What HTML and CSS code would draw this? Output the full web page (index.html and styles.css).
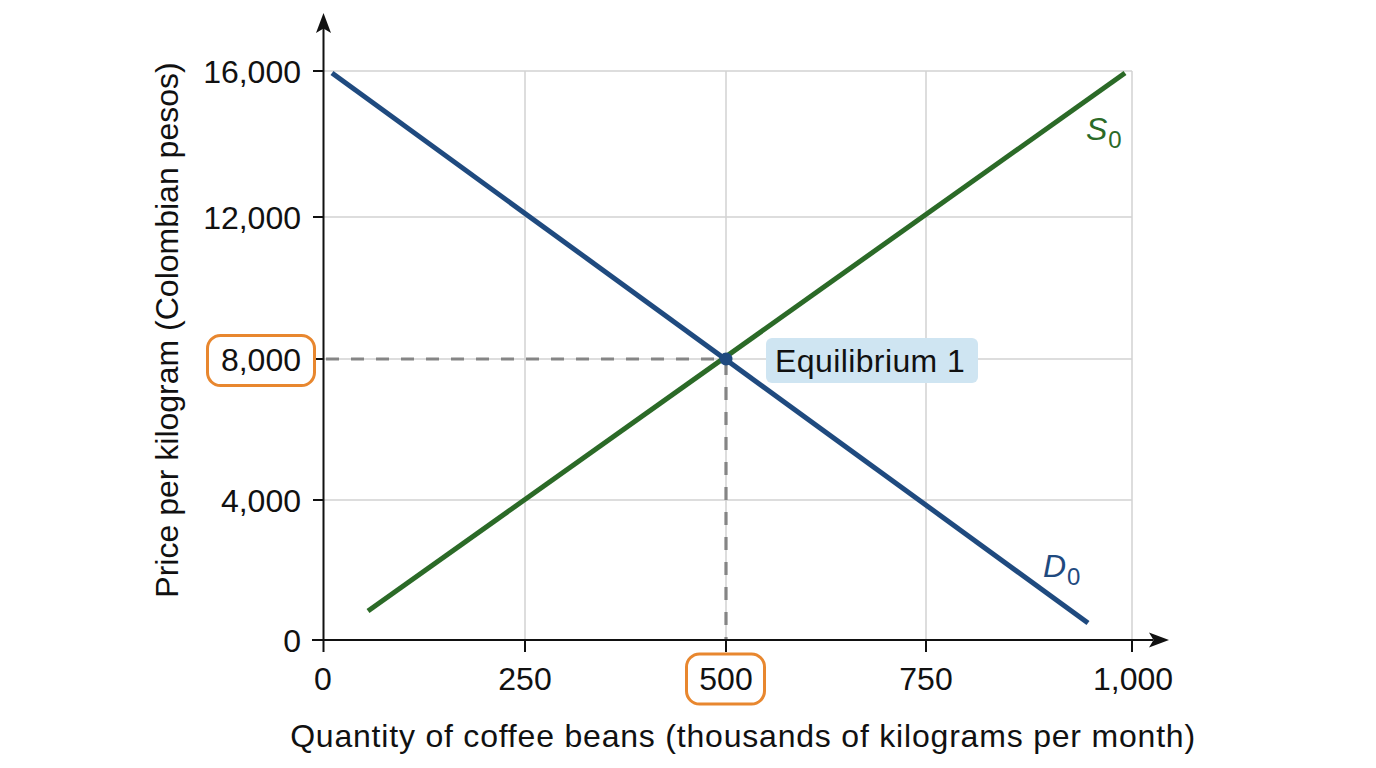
FILE: index.html
```html
<!DOCTYPE html>
<html lang="en">
<head>
<meta charset="utf-8">
<title>Coffee bean market equilibrium</title>
<link rel="stylesheet" href="styles.css">
</head>
<body>
<main class="stage">
<svg class="chart" width="1376" height="768" viewBox="0 0 1376 768" xmlns="http://www.w3.org/2000/svg">
  <!-- grid -->
  <g class="grid">
    <line x1="323" y1="71" x2="1132" y2="71"/>
    <line x1="323" y1="217" x2="1132" y2="217"/>
    <line x1="323" y1="359" x2="1132" y2="359"/>
    <line x1="323" y1="500" x2="1132" y2="500"/>
    <line x1="525" y1="71" x2="525" y2="640"/>
    <line x1="726" y1="71" x2="726" y2="640"/>
    <line x1="926" y1="71" x2="926" y2="640"/>
    <line x1="1132" y1="71" x2="1132" y2="640"/>
  </g>

  <!-- dashed guides -->
  <g class="guide">
    <line x1="326" y1="359" x2="726" y2="359"/>
    <line x1="726" y1="362" x2="726" y2="640"/>
  </g>

  <!-- axes -->
  <g class="axis">
    <line x1="323.5" y1="28" x2="323.5" y2="652"/>
    <line x1="312" y1="640" x2="1153" y2="640"/>
    <line x1="313" y1="71" x2="323" y2="71"/>
    <line x1="313" y1="217" x2="323" y2="217"/>
    <line x1="313" y1="359" x2="323" y2="359"/>
    <line x1="313" y1="500" x2="323" y2="500"/>
    <line x1="525" y1="640" x2="525" y2="652"/>
    <line x1="726" y1="640" x2="726" y2="652"/>
    <line x1="926" y1="640" x2="926" y2="652"/>
    <line x1="1132" y1="640" x2="1132" y2="652"/>
  </g>
  <path class="arrow" d="M323.5 13 L331 33 L323.5 28.5 L316 33 Z"/>
  <path class="arrow" d="M1169 640 L1149 632.5 L1153.5 640 L1149 647.5 Z"/>

  <!-- curves -->
  <line class="supply" x1="368" y1="611" x2="1125" y2="73"/>
  <line class="demand" x1="332" y1="73" x2="1088" y2="623"/>
  <circle class="eq-dot" cx="726" cy="359" r="6.5"/>

  <!-- y tick labels -->
  <g class="tick-y">
    <text x="301" y="82.5">16,000</text>
    <text x="301" y="228.5">12,000</text>
    <text x="301" y="370.5">8,000</text>
    <text x="301" y="511.5">4,000</text>
    <text x="301" y="651.5">0</text>
  </g>

  <!-- x tick labels -->
  <g class="tick-x">
    <text x="323" y="690">0</text>
    <text x="525" y="690">250</text>
    <text x="726" y="690">500</text>
    <text x="926" y="690">750</text>
    <text x="1133" y="690">1,000</text>
  </g>

  <!-- highlight boxes -->
  <rect class="highlight" x="207.5" y="335.5" width="107" height="50" rx="13"/>
  <rect class="highlight" x="686.5" y="654" width="78" height="50" rx="13"/>

  <!-- equilibrium label -->
  <rect class="eq-box" x="766" y="338" width="212" height="45" rx="6"/>
  <text class="eq-label" x="775" y="372">Equilibrium 1</text>

  <!-- curve labels -->
  <text class="curve-label supply-label" x="1086" y="140"><tspan class="curve-letter">S</tspan><tspan class="curve-sub" dx="1" dy="8">0</tspan></text>
  <text class="curve-label demand-label" x="1043" y="577"><tspan class="curve-letter">D</tspan><tspan class="curve-sub" dx="1" dy="8">0</tspan></text>

  <!-- axis titles -->
  <text class="axis-title" x="743" y="747">Quantity of coffee beans (thousands of kilograms per month)</text>
  <text class="axis-title axis-title-y" transform="translate(178 330) rotate(-90)">Price per kilogram (Colombian pesos)</text>
</svg>
</main>
</body>
</html>
```

FILE: styles.css
```css
html, body {
  margin: 0;
  padding: 0;
  background: #ffffff;
}

.stage {
  width: 1376px;
  height: 768px;
  overflow: hidden;
}

.chart {
  display: block;
  font-family: "Liberation Sans", Arial, Helvetica, sans-serif;
}

.grid line {
  stroke: #d2d2d2;
  stroke-width: 1.5;
}

.guide line {
  stroke: #858585;
  stroke-width: 3.2;
  stroke-dasharray: 13 12;
}

.axis line {
  stroke: #111111;
  stroke-width: 2;
}

.arrow {
  fill: #111111;
}

.supply {
  stroke: #2b6a27;
  stroke-width: 5;
}

.demand {
  stroke: #1f4a7f;
  stroke-width: 5;
}

.eq-dot {
  fill: #1f4a7f;
}

.tick-y text,
.tick-x text {
  font-size: 32px;
  fill: #111111;
}

.tick-y text {
  text-anchor: end;
}

.tick-x text {
  text-anchor: middle;
}

.highlight {
  fill: none;
  stroke: #e8872f;
  stroke-width: 3;
}

.eq-box {
  fill: #cfe5f2;
}

.eq-label {
  font-size: 32px;
  letter-spacing: 0.4px;
  fill: #111111;
}

.curve-letter {
  font-size: 32px;
  font-style: italic;
}

.curve-sub {
  font-size: 24px;
}

.supply-label {
  fill: #2b6a27;
}

.demand-label {
  fill: #1f4a7f;
}

.axis-title {
  font-size: 32px;
  letter-spacing: 0.8px;
  fill: #111111;
  text-anchor: middle;
}

.axis-title-y {
  letter-spacing: 0;
}
```
